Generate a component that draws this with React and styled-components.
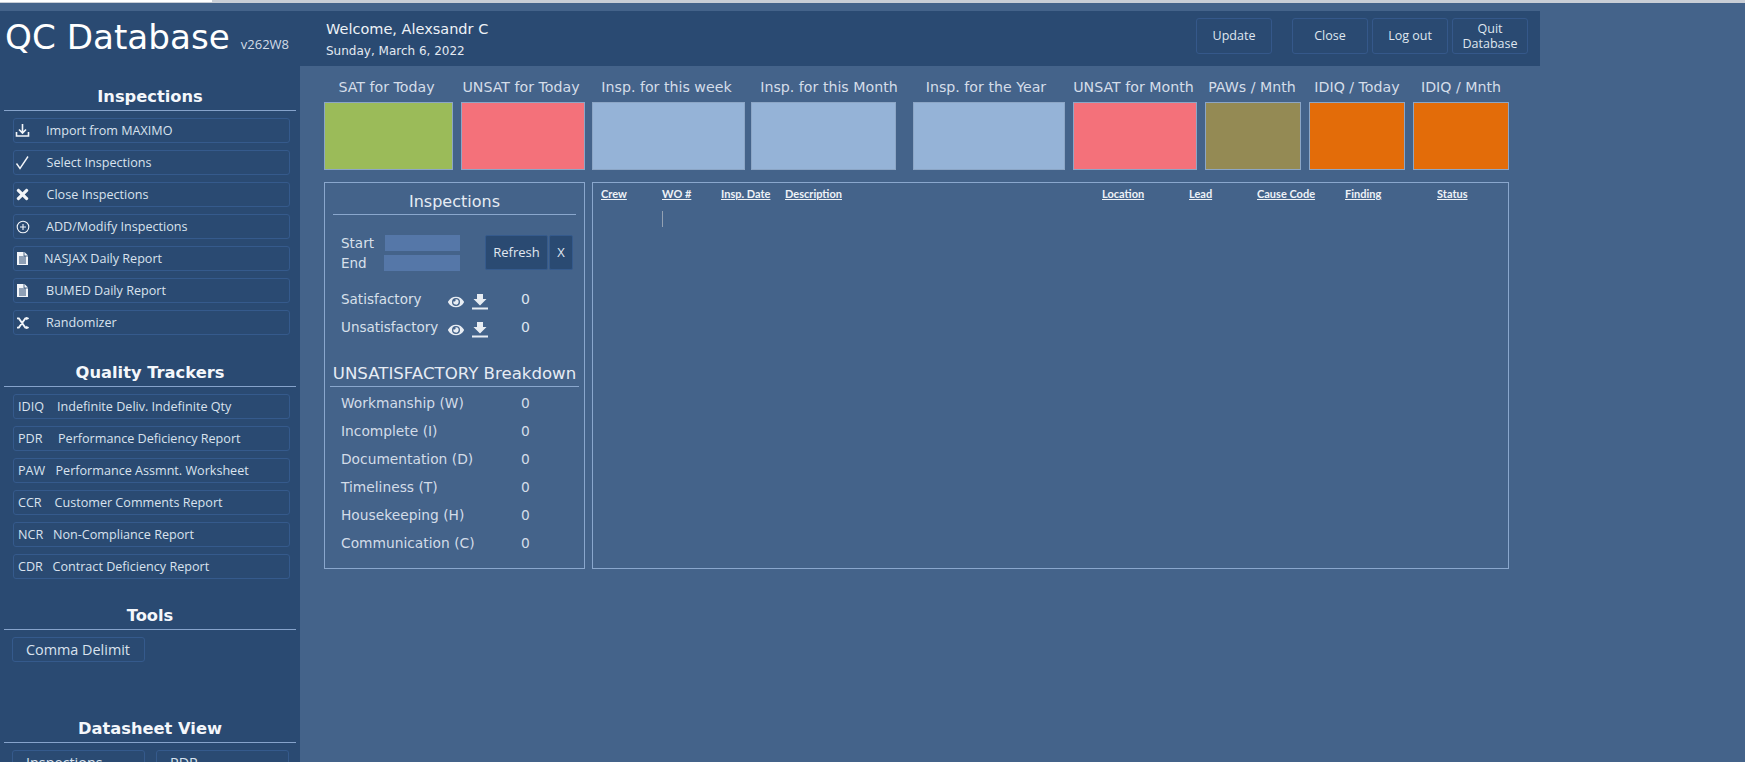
import React from "react";
import styled, { createGlobalStyle } from "styled-components";
import { FaTimes, FaEye } from "react-icons/fa";

const Global = createGlobalStyle`
  html, body { margin: 0; padding: 0; height: 100%; overflow: hidden; background: #44638a; }
  * { box-sizing: border-box; }
`;

const Page = styled.div`
  width: 1745px; height: 762px; overflow: hidden; background: #44638a;
  font-family: "DejaVu Sans", Verdana, sans-serif; color: #dde5ef;
`;
const TopStrip = styled.div`
  height: 3px; background: #c9ced6; margin-bottom: 8px;
`;
const TopWhite = styled.div`
  width: 212px; height: 2px; background: #fff;
`;
const Shell = styled.div`display: flex; align-items: stretch; height: 751px;`;

const Sidebar = styled.aside`
  width: 300px; flex: none; background: #2a4a72; overflow: hidden; padding: 0 4px;
`;
const Brand = styled.div`
  display: flex; align-items: baseline; height: 53px; padding: 3px 0 0 1px; white-space: nowrap;
`;
const BrandName = styled.span`font-size: 34.2px; line-height: 46px; color: #fff;`;
const BrandVersion = styled.span`font-family: "Open Sans", sans-serif; font-size: 13px; margin-left: 11px; color: #d3dce8;`;

const SectionTitle = styled.h2`
  margin: ${p => p.$top}px 0 0; height: 26px; border-bottom: 1px solid #86a3cb;
  font-size: 16.3px; line-height: 24px; font-weight: 700; text-align: center; color: #f4f7fb;
`;
const ButtonStack = styled.div`display: flex; flex-direction: column; gap: 7px; padding: 7px 6px 0 9px;`;
const SideButton = styled.div`
  display: flex; align-items: center; height: 25px; border: 1px solid #355a8c; border-radius: 3px;
  font-family: "Open Sans", sans-serif; font-size: 12.6px; color: #d9e2ee; white-space: nowrap;
  padding-left: ${p => p.$pad || 0}px;
`;
const IconSlot = styled.span`
  display: flex; justify-content: center; align-items: center; width: 17px; flex: none; color: #f2f5f9;
`;
const Code = styled.span`width: ${p => p.$w}px; flex: none;`;
const ToolsRow = styled.div`display: flex; gap: 11px; padding: 7px 6px 0 8px;`;
const ToolButton = styled(SideButton)`
  width: 133px; flex: none; padding-left: ${p => p.$pad}px; font-size: 14.4px;
`;

const Main = styled.main`flex: 1; min-width: 0;`;
const Header = styled.header`
  width: 1240px; height: 55px; background: #2a4a72; display: flex; align-items: center; padding-left: 26px;
`;
const Greeting = styled.div`flex: 1; display: flex; flex-direction: column; gap: 6px; padding-top: 3px;`;
const Welcome = styled.div`font-size: 14.5px; line-height: 17px; color: #eef2f7;`;
const Today = styled.div`font-size: 12px; line-height: 15px; color: #e3e9f1;`;
const HeaderButtons = styled.div`display: flex; padding: 0 12px 5px 0;`;
const HeaderButton = styled.div`
  width: ${p => p.$w}px; height: 36px; margin-left: ${p => p.$gap}px; border: 1px solid #35588a; border-radius: 3px;
  display: flex; align-items: center; justify-content: center; text-align: center;
  font-family: "Open Sans", sans-serif; font-size: 12.5px; line-height: 15.5px; color: #dfe6ef;
`;

const Content = styled.div`padding-left: 24px; width: 1232px;`;
const TileRow = styled.div`display: flex; margin-top: 12px;`;
const TileColumn = styled.div`width: ${p => p.$w}px; margin-left: ${p => p.$gap}px; flex: none; display: flex; flex-direction: column; align-items: center;`;
const TileLabel = styled.div`
  height: 24px; line-height: 18px; font-size: 14.2px; white-space: nowrap; color: #d4dde9;
  padding-left: ${p => (p.$nudge > 0 ? p.$nudge * 2 : 0)}px;
  padding-right: ${p => (p.$nudge < 0 ? -p.$nudge * 2 : 0)}px;
`;
const Tile = styled.div`
  align-self: stretch; height: 68px; background: ${p => p.$c}; border: 1px solid #8ca6c6;
`;

const Panels = styled.div`display: flex; gap: 7px; margin-top: 12px;`;
const LeftPanel = styled.section`
  width: 261px; height: 387px; flex: none; border: 1px solid #8aa7cd; padding: 0 8px;
`;
const PanelTitle = styled.div`
  height: 32px; border-bottom: 1px solid #8aa7cd; font-size: ${p => p.$size}px; line-height: 38px; text-align: center; white-space: nowrap; color: #e6ecf4;
`;
const DateBlock = styled.div`display: flex; align-items: flex-start; margin-top: 20px; padding-left: 8px;`;
const DateLabels = styled.div`width: 144px; display: flex; flex-direction: column; gap: 4px;`;
const DateRow = styled.div`display: flex; align-items: center; height: 16px; font-size: 13.5px; color: #d8e0eb;`;
const DateName = styled.span`width: ${p => p.$w}px;`;
const DateInput = styled.div`width: ${p => p.$w}px; height: 16px; background: #5577a8;`;
const Refresh = styled.div`
  width: ${p => p.$w}px; height: 35px; margin-right: 1px; padding-bottom: 2px; background: #2a4a72; border: 1px solid #355a8c; border-radius: 2px;
  display: flex; align-items: center; justify-content: center; font-family: "Open Sans", sans-serif; font-size: 13px; color: #e0e7f0;
`;
const CountBlock = styled.div`margin-top: 20px; padding-left: 8px; display: flex; flex-direction: column; gap: 12px;`;
const CountRow = styled.div`display: flex; align-items: center; height: 16px; font-size: 13.5px; color: #d8e0eb;`;
const CountName = styled.span`width: 107px; white-space: nowrap;`;
const Action = styled.span`display: flex; justify-content: center; width: 16px; margin-right: 8px; padding-top: 6px; color: #e8edf3;`;
const CountValue = styled.span`margin-left: ${p => p.$left}px; font-size: 14px; color: #dde5ef;`;
const BreakdownTitle = styled(PanelTitle)`margin: 24px -3px 0; height: 28px; line-height: 29px;`;
const Breakdown = styled.div`padding: 8px 0 0 8px; display: flex; flex-direction: column; gap: 12px;`;
const BreakdownRow = styled.div`display: flex; height: 16px; align-items: center; font-size: 13.8px; color: #d3dce8; white-space: nowrap;`;
const BreakdownName = styled.span`width: 180px;`;

const TablePanel = styled.section`
  width: 917px; height: 387px; flex: none; border: 1px solid #8aa7cd; padding: 2px 0 0 8px;
`;
const TableGrid = styled.div`
  display: grid; grid-template-columns: 61px 59px 64px 317px 87px 68px 88px 92px 60px; grid-auto-rows: 18px;
`;
const ColHead = styled.div`
  font-family: Lato, sans-serif; font-size: 11px; font-weight: 700; line-height: 17px; text-decoration: underline; color: #eef2f7; white-space: nowrap;
`;
const Caret = styled.div`grid-column: 2; width: 1px; height: 16px; margin-top: 8px; background: #93a1b3;`;

const ImportIcon = () => (
  <svg width="15" height="15" viewBox="0 0 15 15" fill="none" stroke="currentColor" strokeWidth="1.6">
    <path d="M7.5 1v8.5M4 6.5l3.5 3.5L11 6.5" />
    <path d="M1.5 9v4h12V9" />
  </svg>
);
const CheckIcon = () => (
  <svg width="15" height="15" viewBox="0 0 15 15" fill="none" stroke="currentColor" strokeWidth="1.4">
    <path d="M1.5 8.5l3.5 5L13 1.5" />
  </svg>
);
const PlusCircleIcon = () => (
  <svg width="14" height="14" viewBox="0 0 14 14" fill="none" stroke="currentColor" strokeWidth="1.1">
    <circle cx="7" cy="7" r="5.8" /><path d="M7 4v6M4 7h6" />
  </svg>
);
const DocIcon = () => (
  <svg width="13" height="15" viewBox="0 0 13 15">
    <path d="M1 1h7.5L12 4.5V14H1z" fill="currentColor" />
    <path d="M3 6h7M3 8h7M3 10h7M3 12h7" stroke="#2a4a72" strokeWidth="1" />
    <path d="M8 1v4h4" fill="none" stroke="#2a4a72" strokeWidth="0.8" />
  </svg>
);
const ShuffleIcon = () => (
  <svg width="14" height="12" viewBox="0 0 15 13" fill="none" stroke="currentColor" strokeWidth="2">
    <path d="M1 1.5h2l7 10h2M1 11.5h2l7-10h2" />
    <path d="M11 0l3 1.5-3 1.5zM11 10l3 1.5-3 1.5z" fill="currentColor" strokeWidth="0.6" />
  </svg>
);
const SaveIcon = () => (
  <svg width="16" height="16" viewBox="0 0 16 16" fill="currentColor">
    <path d="M5 0h6v5h3.5L8 11.5 1.5 5H5z" />
    <rect x="0" y="13.5" width="16" height="2" />
  </svg>
);

const inspections = [
  { icon: <ImportIcon />, text: "Import from MAXIMO", w: 32 },
  { icon: <CheckIcon />, text: "Select Inspections", w: 32.5 },
  { icon: <FaTimes size={17} />, text: "Close Inspections", w: 32.5 },
  { icon: <PlusCircleIcon />, text: "ADD/Modify Inspections", w: 32 },
  { icon: <DocIcon />, text: "NASJAX Daily Report", w: 30 },
  { icon: <DocIcon />, text: "BUMED Daily Report", w: 32 },
  { icon: <ShuffleIcon />, text: "Randomizer", w: 32 },
];
const trackers = [
  ["IDIQ", "Indefinite Deliv. Indefinite Qty", 39],
  ["PDR", "Performance Deficiency Report", 40],
  ["PAW", "Performance Assmnt. Worksheet", 37.5],
  ["CCR", "Customer Comments Report", 36.5],
  ["NCR", "Non-Compliance Report", 35],
  ["CDR", "Contract Deficiency Report", 34.5],
];
const tiles = [
  ["SAT for Today", 129, 0, "#9bbb59", -2],
  ["UNSAT for Today", 124, 8, "#f4717a", -2],
  ["Insp. for this week", 153, 7, "#95b3d7", -2],
  ["Insp. for this Month", 145, 6, "#95b3d7", 5.5],
  ["Insp. for the Year", 152, 17, "#95b3d7", -3],
  ["UNSAT for Month", 124, 8, "#f4717a", -1.5],
  ["PAWs / Mnth", 96, 8, "#948a54", -1],
  ["IDIQ / Today", 96, 8, "#e36c09", 0],
  ["IDIQ / Mnth", 96, 8, "#e36c09", 0],
];
const breakdown = [
  "Workmanship (W)", "Incomplete (I)", "Documentation (D)", "Timeliness (T)", "Housekeeping (H)", "Communication (C)",
];
const columns = ["Crew", "WO #", "Insp. Date", "Description", "Location", "Lead", "Cause Code", "Finding", "Status"];

const Count = ({ name }) => (
  <CountRow>
    <CountName>{name}</CountName>
    <Action><FaEye size={16} /></Action>
    <Action><SaveIcon /></Action>
    <CountValue $left={25}>0</CountValue>
  </CountRow>
);

export default function App() {
  return (
    <Page>
      <Global />
      <TopStrip><TopWhite /></TopStrip>
      <Shell>
        <Sidebar>
          <Brand>
            <BrandName>QC Database</BrandName>
            <BrandVersion>v262W8</BrandVersion>
          </Brand>
          <SectionTitle $top={21}>Inspections</SectionTitle>
          <ButtonStack>
            {inspections.map(b => (
              <SideButton key={b.text}>
                <IconSlot>{b.icon}</IconSlot>
                <Code $w={b.w - 17} />
                {b.text}
              </SideButton>
            ))}
          </ButtonStack>
          <SectionTitle $top={26}>Quality Trackers</SectionTitle>
          <ButtonStack>
            {trackers.map(([code, label, w]) => (
              <SideButton key={code} $pad={4}>
                <Code $w={w}>{code}</Code>
                {label}
              </SideButton>
            ))}
          </ButtonStack>
          <SectionTitle $top={25}>Tools</SectionTitle>
          <ToolsRow>
            <ToolButton $pad={13}>Comma Delimit</ToolButton>
          </ToolsRow>
          <SectionTitle $top={55}>Datasheet View</SectionTitle>
          <ToolsRow>
            <ToolButton $pad={13}>Inspections</ToolButton>
            <ToolButton $pad={13}>PDR</ToolButton>
          </ToolsRow>
        </Sidebar>
        <Main>
          <Header>
            <Greeting>
              <Welcome>Welcome, Alexsandr C</Welcome>
              <Today>Sunday, March 6, 2022</Today>
            </Greeting>
            <HeaderButtons>
              <HeaderButton $w={76} $gap={0}>Update</HeaderButton>
              <HeaderButton $w={76} $gap={20}>Close</HeaderButton>
              <HeaderButton $w={76} $gap={4}>Log out</HeaderButton>
              <HeaderButton $w={76} $gap={4}>Quit<br />Database</HeaderButton>
            </HeaderButtons>
          </Header>
          <Content>
            <TileRow>
              {tiles.map(([label, w, gap, c, nudge]) => (
                <TileColumn key={label} $w={w} $gap={gap}>
                  <TileLabel $nudge={nudge}>{label}</TileLabel>
                  <Tile $c={c} />
                </TileColumn>
              ))}
            </TileRow>
            <Panels>
              <LeftPanel>
                <PanelTitle $size={16}>Inspections</PanelTitle>
                <DateBlock>
                  <DateLabels>
                    <DateRow><DateName $w={44}>Start</DateName><DateInput $w={75} /></DateRow>
                    <DateRow><DateName $w={43}>End</DateName><DateInput $w={76} /></DateRow>
                  </DateLabels>
                  <Refresh $w={63}>Refresh</Refresh>
                  <Refresh $w={24}>X</Refresh>
                </DateBlock>
                <CountBlock>
                  <Count name="Satisfactory" />
                  <Count name="Unsatisfactory" />
                </CountBlock>
                <BreakdownTitle $size={16.6}>UNSATISFACTORY Breakdown</BreakdownTitle>
                <Breakdown>
                  {breakdown.map(name => (
                    <BreakdownRow key={name}>
                      <BreakdownName>{name}</BreakdownName>0
                    </BreakdownRow>
                  ))}
                </Breakdown>
              </LeftPanel>
              <TablePanel>
                <TableGrid>
                  {columns.map(c => <ColHead key={c}>{c}</ColHead>)}
                  <Caret />
                </TableGrid>
              </TablePanel>
            </Panels>
          </Content>
        </Main>
      </Shell>
    </Page>
  );
}
